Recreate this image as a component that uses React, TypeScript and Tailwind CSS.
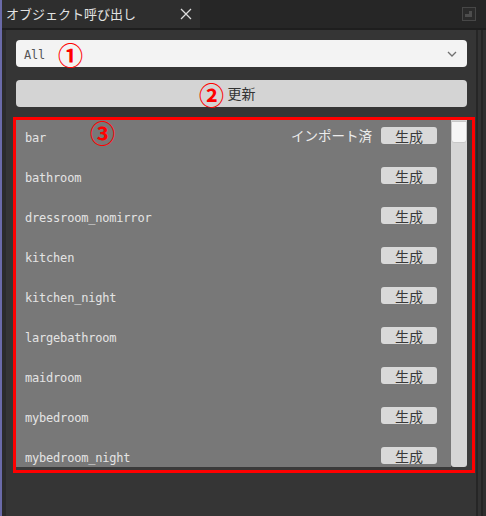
const rooms = [
  "bar",
  "bathroom",
  "dressroom_nomirror",
  "kitchen",
  "kitchen_night",
  "largebathroom",
  "maidroom",
  "mybedroom",
  "mybedroom_night",
];

const jp = { fontFamily: '"Noto Sans CJK JP", "Noto Sans", sans-serif' };
const mono = { fontFamily: '"DejaVu Sans Mono", "Liberation Mono", monospace' };

function Marker({ n }: { n: string }) {
  return (
    <span className="text-[25px] leading-none font-bold text-[#ff0000]" style={jp}>
      {n}
    </span>
  );
}

function RoomRow({ name, imported }: { name: string; imported?: boolean }) {
  return (
    <div className="flex h-[17px] items-center justify-between pl-[9px] pr-[14px]">
      <span className="pt-[5px] text-[12px] tracking-[-0.2px] text-[#e4e4e4]" style={mono}>
        {name}
      </span>
      <div className="flex items-center gap-[9px]">
        {imported && (
          <span className="text-[13.5px] text-[#ececec]" style={jp}>
            インポート済
          </span>
        )}
        <div
          className="flex h-[17px] w-[56px] items-center justify-center rounded-[3px] bg-[#d9d9d9] text-[14px] leading-none text-[#3a3a3a]"
          style={jp}
        >
          生成
        </div>
      </div>
    </div>
  );
}

export default function App() {
  return (
    <div className="flex h-[516px] w-[486px] overflow-hidden bg-[#353535]">
      <div className="w-[2px] bg-[#6a6aa8]" />
      <div className="flex flex-1 flex-col">
        {/* tab bar */}
        <div className="flex h-[28px] items-stretch bg-[#262626]">
          <div className="flex w-[198px] items-center justify-between bg-[#2e2e2e] pl-[4px] pr-[8px]">
            <span className="text-[13px] text-[#e2e2e2]" style={jp}>
              オブジェクト呼び出し
            </span>
            <svg width="12" height="12" viewBox="0 0 12 12">
              <path d="M1 1L11 11M11 1L1 11" stroke="#dcdcdc" strokeWidth="1.3" />
            </svg>
          </div>
          <div className="flex-1" />
          <div className="flex items-center pr-[10px]">
            <svg width="14" height="14" viewBox="0 0 14 14">
              <rect x="0.5" y="0.5" width="13" height="13" fill="#2b2b2b" stroke="#474747" />
              <path d="M3 7H7V4H10V10H3Z" fill="#4d4d4d" />
            </svg>
          </div>
        </div>
        <div className="h-[2px] bg-[#1e1e1e]" />

        {/* body */}
        <div className="flex flex-1">
          <div className="w-[4px] bg-[#2b2b2b]" />
          <div className="flex flex-1 flex-col pl-[10px] pr-[9px] pt-[10px]">
            <div className="relative flex h-[27px] items-center rounded-[4px] bg-[#f3f3f3] pl-[8px] pr-[10px]">
              <span className="pt-[3px] text-[12px] tracking-[-0.2px] text-[#555]" style={mono}>
                All
              </span>
              <div className="flex-1" />
              <svg width="10" height="6" viewBox="0 0 10 6">
                <path d="M1 1L5 5L9 1" fill="none" stroke="#707070" strokeWidth="1.3" />
              </svg>
              <span className="absolute left-[42px] top-[2px] flex">
                <Marker n="①" />
              </span>
            </div>

            <div className="relative mt-[13px] flex h-[27px] items-center justify-center rounded-[4px] bg-[#d4d4d4]">
              <span className="text-[14px] text-[#333]" style={jp}>
                更新
              </span>
              <span className="absolute left-[183px] top-[2px] flex">
                <Marker n="②" />
              </span>
            </div>

            {/* list, marked with red box */}
            <div className="relative -ml-[3px] -mr-[8px] mt-[10px] h-[356px] border-[3px] border-[#ff0000]">
              <div className="flex h-full bg-[#3a3a3a] pb-[3px] pr-[5px]">
                <div className="flex flex-1 flex-col gap-[23px] bg-[#787878] pt-[7px]">
                  {rooms.map((r, i) => (
                    <RoomRow key={r} name={r} imported={i === 0} />
                  ))}
                </div>
                <div className="flex w-[16px] flex-col rounded-b-[3px] bg-[#d6d6d6] pt-[1px]">
                  <div className="h-[22px] rounded-b-[3px] border border-[#c8c8c8] bg-[#f6f6f6]" />
                </div>
              </div>
              <span className="absolute left-[74px] top-[0px] flex">
                <Marker n="③" />
              </span>
            </div>
          </div>
          <div className="w-[2px] bg-[#262626]" />
          <div className="w-[3px] bg-[#333333]" />
          <div className="w-[2px] bg-[#242424]" />
          <div className="w-[3px] bg-[#2f2f2f]" />
        </div>
      </div>
    </div>
  );
}
